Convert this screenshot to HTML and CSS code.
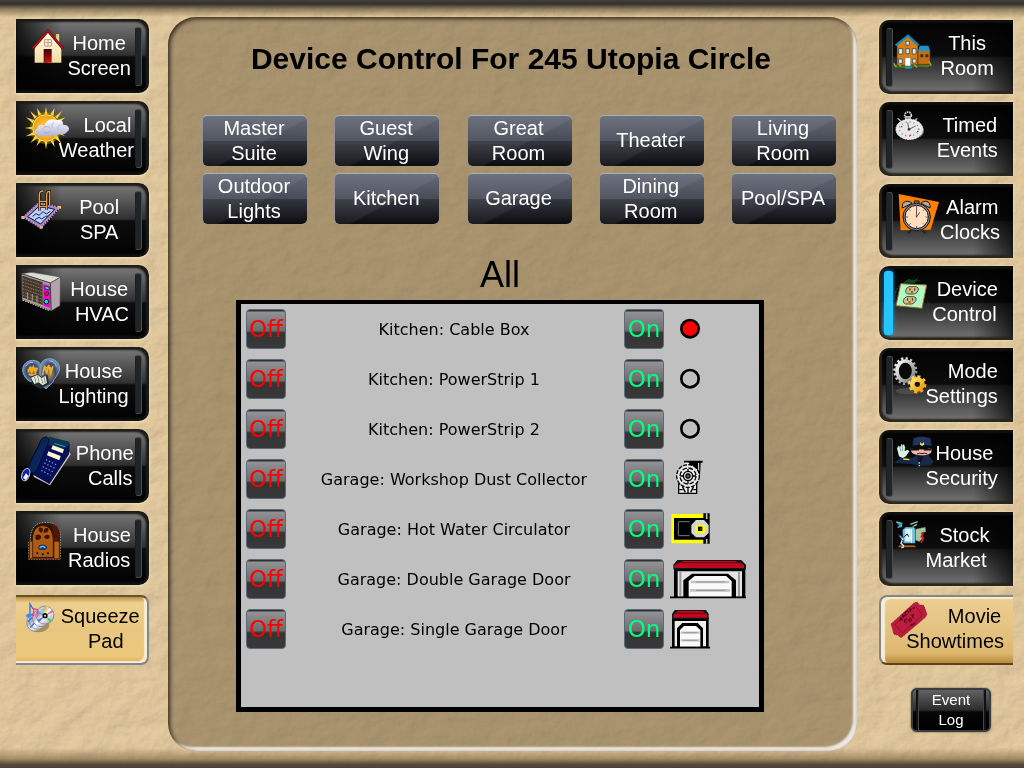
FILE: index.html
```html
<!DOCTYPE html>
<html lang="en">

<head>
    <meta charset="UTF-8">
    <meta name="viewport" content="width=device-width, initial-scale=1.0">
    <title>Device Control</title>
    <link rel="stylesheet" href="styles.css">
</head>

<body>

    <!-- stone wall behind everything -->
    <svg class="stone" aria-hidden="true">
        <filter id="stone" x="0" y="0" width="100%" height="100%">
            <feTurbulence type="fractalNoise" baseFrequency="0.04 0.05" numOctaves="5" seed="8" />
            <feDiffuseLighting lighting-color="#ecd4aa" surfaceScale="2" diffuseConstant="1.1">
                <feDistantLight azimuth="220" elevation="55" />
            </feDiffuseLighting>
        </filter>
        <rect width="100%" height="100%" filter="url(#stone)" />
    </svg>

    <div class="page">

        <nav class="side left" aria-label="House">
            <button type="button" class="tab">
                <svg class="icon" viewBox="48 57 180 180">
                    <defs>
                        <linearGradient id="door" x2="0" y2="1"><stop offset="0" stop-color="#300" /><stop offset="1" stop-color="#d01010" /></linearGradient>
                        <linearGradient id="wall" x2="0" y2="1"><stop offset="0" stop-color="#fffdf0" /><stop offset="1" stop-color="#f3dca0" /></linearGradient>
                    </defs>
                    <path d="M167 101h12v32h-12z" fill="#e9d28c" stroke="#5a3a10" stroke-width="2" />
                    <path d="M104 188v-48l40-46 40 46v48z" fill="url(#wall)" />
                    <path d="M98 146l46-53 45 53" fill="none" stroke="#4a0808" stroke-width="8" />
                    <path d="M98 145l46-53 45 53" fill="none" stroke="#d01a1a" stroke-width="4" />
                    <path d="M134 119h20v19h-20z M144 119v19 M134 128h20" fill="#fff" stroke="#c49468" stroke-width="3" />
                    <path d="M131 147h13v41h-13z" fill="#5a0a08" />
                    <path d="M134 147h21v41h-21z" fill="url(#door)" />
                </svg>
                <span class="label">      Home<br>      Screen</span>
            </button>
            <button type="button" class="tab">
                <svg class="icon" viewBox="48 303 180 180">
                    <defs>
                        <radialGradient id="sun"><stop offset="0" stop-color="#ffd84a" /><stop offset="1" stop-color="#ef9c10" /></radialGradient>
                        <linearGradient id="cloud" x2="0" y2="1"><stop offset="0" stop-color="#fff" /><stop offset="1" stop-color="#aeb0d4" /></linearGradient>
                    </defs>
                    <circle cx="138" cy="384" r="48" fill="#8a7a00" opacity=".6" />
                    <path fill="#ffd23c" d="M134 342l4-22 4 22z M134 426l4 22 4-22z M96 380l-22 4 22 4z M151 343l13-19-4 24z M165 350l21-17-14 23z M172 361l24-9-19 18z M124 343l-13-19 4 24z M111 350l-21-17 14 23z M103 361l-25-9 20 18z M99 397l-22 12 28-4z M106 407l-15 22 22-15z M117 418l-8 21 15-17z M152 424l12 18-4-23z M164 414l21 17-13-24z M174 401l20 7-16-14z" />
                    <circle cx="138" cy="384" r="40" fill="url(#sun)" stroke="#ffe860" stroke-width="3" />
                    <path d="M112 404c-12-1-10-16 0-17 0-12 14-16 22-9 2-16 20-26 35-17 12-6 22 3 20 13 18-1 24 16 12 21-6 9-16 9-21 5-6 10-18 10-24 4-8 8-17 7-21 1-7 6-18 7-23-1z" fill="url(#cloud)" />
                    <path d="M128 386c7-9 20-8 24 0m10-18c-8 3-8 12-2 17m22-10c-8 2-11 8-7 14m-42 6c8 6 15 4 18-2" fill="none" stroke="#9fa2c4" stroke-width="2" />
                </svg>
                <span class="label">         Local<br>     Weather</span>
            </button>
            <button type="button" class="tab">
                <svg class="icon" viewBox="48 549 180 180">
                    <path d="M68 652l49-47 64 17-58 64z" fill="#a68ac4" stroke="#2a1a38" stroke-width="5" stroke-dasharray="5 3" />
                    <path d="M70 652l47-45 63 15-57 62z" fill="none" stroke="#c7a8d8" stroke-width="5" stroke-dasharray="3 5" />
                    <path d="M83 650l36-33 45 11-42 44z" fill="#b9ccff" stroke="#111" stroke-width="3" />
                    <path d="M98 649l10-8 9 5 12-11 10 7 12-8M105 659l12-7 8 5 12-8 8-1" fill="none" stroke="#1c2850" stroke-width="3" />
                    <path d="M118 632v-48q0-12 12-11M140 630v-45q0-12 9-11v42M118 604h22M118 620h22" fill="none" stroke="#201000" stroke-width="8" />
                    <path d="M118 632v-48q0-12 12-11M140 630v-45q0-12 9-11v42M118 604h22M118 620h22" fill="none" stroke="#dfa053" stroke-width="4" />
                    <path d="M119 678h9v8h-9zM64 648h9v9h-9zM174 618h9v8h-9z" fill="#ecb974" />
                </svg>
                <span class="label">      Pool<br>      SPA</span>
            </button>
            <button type="button" class="tab">
                <svg class="icon" viewBox="48 30 180 180">
                    <path d="M64 56l32-4 86 14-31 18z" fill="#dcdcd4" stroke="#555" stroke-width="2" />
                    <path d="M151 84l31-18-2 86-27 16z" fill="#b1a2ab" stroke="#444" stroke-width="2" />
                    <path d="M64 56l87 28 2 84-87-34z" fill="#a89c90" stroke="#222" stroke-width="2" />
                    <path d="M67 62l61 20v68l-61-23z" fill="#43382e" />
                    <path d="M68 71l59 20M68 81l59 20M68 91l59 21M68 101l59 21M68 111l59 22M68 120l59 22" stroke="#8c7660" stroke-width="3" stroke-dasharray="5 3" />
                    <path d="M83 112v20M97 117v20M111 122v21" stroke="#a29a90" stroke-width="3" />
                    <path d="M130 86l20 7v67l-20-8z" fill="#f000e8" />
                    <path d="M135 93l12 4v8l-12-4z" fill="#20e8f0" stroke="#111" stroke-width="2" />
                    <circle cx="140" cy="116" r="6" fill="#e01818" stroke="#111" stroke-width="2" />
                    <circle cx="139" cy="140" r="7" fill="#20d8d8" stroke="#111" stroke-width="3" />
                    <path d="M68 135l80 32" stroke="#f4f4f4" stroke-width="3" stroke-dasharray="4 4" />
                </svg>
                <span class="label">      House<br>       HVAC</span>
            </button>
            <button type="button" class="tab">
                <svg class="icon" viewBox="48 276 180 180">
                    <defs>
                        <radialGradient id="bulb"><stop offset="0" stop-color="#b89840" /><stop offset=".6" stop-color="#3c4674" /><stop offset="1" stop-color="#6f8fb0" /></radialGradient>
                    </defs>
                    <path d="M72 360c-12-22 4-44 26-44 13 0 22 6 26 16l-4 38-26 10c-10-2-18-10-22-20z" fill="url(#bulb)" stroke="#7fa6b8" stroke-width="3" />
                    <path d="M120 336c2-16 14-25 29-25 22 0 34 20 28 38-4 14-14 18-19 34l-20 18-18-12z" fill="url(#bulb)" stroke="#7fa6b8" stroke-width="3" />
                    <path d="M84 352l6-14 5 14 5-16 6 16 6-14M128 360l6-28 6 24 6-26 6 24 7-20M84 346q14-16 28 0M129 348q14-22 29-4M86 358q12 6 24-2" fill="none" stroke="#f2ac20" stroke-width="5" />
                    <path d="M92 365l22-8 10 9 18-7 5 27-24 17-26-14z" fill="#222b2c" />
                    <path d="M93 368l20-9 11 10 13-7 4 21-13 8-12-9-13 5z" fill="#e9efde" />
                    <path d="M103 365l6 20M112 361l5 19M124 370l5 16M132 366l4 18" stroke="#7d887c" stroke-width="3" />
                    <path d="M77 334q7-13 22-12M148 317q18 2 21 18" fill="none" stroke="#a8c2f0" stroke-width="3" />
                </svg>
                <span class="label">    House<br>    Lighting</span>
            </button>
            <button type="button" class="tab">
                <svg class="icon" viewBox="48 522 180 180">
                    <path d="M150 691l62-93-4-8-61 92-48-24 3 8z" fill="#d2d2d2" />
                    <path d="M134 560l74 8-2 30-58 88-52-30z" fill="#061057" stroke="#000528" stroke-width="2" />
                    <path d="M134 556l14-11 60 15v10l-14 10-58-12z" fill="#0c3550" />
                    <path d="M140 546q-16 0-21 18l-34 70q-8 14 8 19 16 3 20-12l30-72q8-16-3-23z" fill="#0a2452" stroke="#000828" stroke-width="3" />
                    <path d="M131 566l-34 72M139 569l-32 72" stroke="#102ca0" stroke-width="3" stroke-dasharray="3 3" />
                    <path d="M158 571l34 12-4 12-34-13zM145 589l37 14-4 13-37-15z" fill="#fff6d5" />
                    <path d="M164 566l32 9" stroke="#3b90c4" stroke-width="3" />
                    <path d="M138 614l32 16M133 624l32 16M128 635l32 16M124 646l28 15" stroke="#7f8ef8" stroke-width="4" stroke-dasharray="4 6" />
                    <path d="M84 640c-12 0-20 14-19 28 2 13 16 12 21-1 4-10 6-20-2-27z" fill="#1420a0" stroke="#d8dcff" stroke-width="3" />
                    <path d="M69 668l9-13 8 8-8 13z" fill="#f2f5ff" />
                </svg>
                <span class="label">        Phone<br>          Calls</span>
            </button>
            <button type="button" class="tab">
                <svg class="icon" viewBox="48 33 180 180">
                    <path d="M86 178v-52l5-5c0-36 15-53 40-53 30-4 51 15 50 44v66z" fill="#2a1608" stroke="#ccc" stroke-width="2" stroke-dasharray="5 3" />
                    <path d="M145 70c26 0 36 15 35 46v60l-18 2v-60c0-28-5-42-17-48z" fill="#4e160a" />
                    <path d="M97 172v-48c0-30 10-47 31-47s32 18 32 46v49z" fill="#ad5a12" stroke="#3a1804" stroke-width="3" />
                    <path d="M88 124h10v52h-10zM162 124h16v52h-16z" fill="#b96414" stroke="#3a1804" stroke-width="2" />
                    <path d="M117 83c13-3 14 8 8 16-8-3-11-10-8-16zM107 106c8-5 15-2 17 6-3 9-13 10-18 4zM132 112c2-8 12-10 17-4 2 8-9 14-17 4zM131 98c0-11 5-16 13-13 4 7-2 15-13 13z" fill="#421006" />
                    <path d="M114 144c3-14 24-14 28 0l-6 5h-17z" fill="#152d58" />
                    <path d="M119 144q9-10 17 0" fill="none" stroke="#5bb8ff" stroke-width="5" />
                    <circle cx="112" cy="160" r="3" /><circle cx="128" cy="163" r="3" /><circle cx="144" cy="160" r="3" />
                    <path d="M84 176h98" stroke="#6e300a" stroke-width="4" />
                </svg>
                <span class="label">       House<br>      Radios</span>
            </button>
            <button type="button" class="tab gold">
                <svg class="icon" viewBox="48 285 180 180">
                    <defs>
                        <linearGradient id="disc" x2="1" y2="1"><stop offset="0" stop-color="#e9eef0" /><stop offset=".35" stop-color="#aeb6c2" /><stop offset=".5" stop-color="#fff" /><stop offset="1" stop-color="#8d97a4" /></linearGradient>
                    </defs>
                    <ellipse cx="116" cy="368" rx="32" ry="23" fill="#6b5830" opacity=".5" />
                    <g stroke="#6f7784" stroke-width="2" fill="url(#disc)">
                        <circle cx="106" cy="362" r="26" />
                        <circle cx="114" cy="356" r="26" />
                        <circle cx="123" cy="348" r="26" />
                        <circle cx="135" cy="339" r="27" />
                    </g>
                    <path d="M135 341l-22-15-3 7z" fill="#28c0b0" /><path d="M135 341l21-18 4 7z" fill="#e460a8" /><path d="M135 341l22 15-6 6z" fill="#46c850" /><path d="M135 341l-18 21-6-8z" fill="#6c70e8" /><path d="M135 341l4-28h7z" fill="#ffd850" />
                    <path d="M84 360l12-13M91 377l12-14" stroke="#4970e8" stroke-width="5" />
                    <circle cx="135" cy="341" r="8" fill="#111" /><circle cx="135" cy="341" r="3" fill="#ddd" />
                    <path d="M90 340v-34l9 15" fill="none" stroke="#2f72e0" stroke-width="4" /><ellipse cx="86" cy="341" rx="8" ry="6" fill="#3a8ff0" />
                    <path d="M101 338v-18l12 3v16" fill="none" stroke="#e83aa8" stroke-width="4" /><circle cx="98" cy="339" r="5" fill="#e83aa8" /><circle cx="110" cy="340" r="5" fill="#f060c0" />
                </svg>
                <span class="label">      Squeeze<br>        Pad</span>
            </button>
        </nav>

        <main class="panel">
            <h1>Device Control For 245 Utopia Circle</h1>

            <div class="rooms">
                <button type="button">Master<br>Suite</button>
                <button type="button">Guest<br>Wing</button>
                <button type="button">Great<br>Room</button>
                <button type="button">Theater</button>
                <button type="button">Living<br>Room</button>
                <button type="button">Outdoor<br>Lights</button>
                <button type="button">Kitchen</button>
                <button type="button">Garage</button>
                <button type="button">Dining<br>Room</button>
                <button type="button">Pool/SPA</button>
            </div>

            <section class="devices">
                <h2>All</h2>
                <div class="list">
                    <table>
                        <tr>
                            <td><button type="button" class="off">Off</button></td>
                            <th scope="row">Kitchen: Cable Box</th>
                            <td><button type="button" class="on">On</button></td>
                            <td class="state"><svg viewBox="210 28 240 120"><circle cx="270" cy="87" r="26" fill="#f00" stroke="#000" stroke-width="8" /></svg></td>
                        </tr>
                        <tr>
                            <td><button type="button" class="off">Off</button></td>
                            <th scope="row">Kitchen: PowerStrip 1</th>
                            <td><button type="button" class="on">On</button></td>
                            <td class="state"><svg viewBox="210 28 240 120"><circle cx="270" cy="87" r="26" fill="none" stroke="#000" stroke-width="8" /></svg></td>
                        </tr>
                        <tr>
                            <td><button type="button" class="off">Off</button></td>
                            <th scope="row">Kitchen: PowerStrip 2</th>
                            <td><button type="button" class="on">On</button></td>
                            <td class="state"><svg viewBox="210 28 240 120"><circle cx="270" cy="87" r="26" fill="none" stroke="#000" stroke-width="8" /></svg></td>
                        </tr>
                        <tr>
                            <td><button type="button" class="off">Off</button></td>
                            <th scope="row">Garage: Workshop Dust Collector</th>
                            <td><button type="button" class="on">On</button></td>
                            <td class="state">
                                <svg viewBox="210 478 240 120">
                                    <path d="M252 483h56v6h-6l-2 38-10-14-36-9z" fill="#000" />
                                    <path d="M254 490h12v10h-12zM296 490v24" fill="#eee" stroke="#eee" stroke-width="3" />
                                    <path d="M236 581v-28h54v28z" fill="#eee" stroke="#000" stroke-width="4" />
                                    <path d="M247 560l9 18M281 560l-9 18M264 556v24M238 570h10M280 570h10" stroke="#000" stroke-width="4" />
                                    <circle cx="264" cy="529" r="34" fill="#e8e8e8" stroke="#000" stroke-width="4" stroke-dasharray="12 4" />
                                    <circle cx="264" cy="529" r="24" fill="none" stroke="#000" stroke-width="4" stroke-dasharray="14 5" />
                                    <circle cx="264" cy="529" r="14" fill="#ccc" stroke="#000" stroke-width="4" />
                                    <circle cx="264" cy="529" r="6" fill="#666" stroke="#000" stroke-width="4" />
                                    <path d="M264 508v8M264 542v10M241 529h9M279 529h9" stroke="#000" stroke-width="4" />
                                </svg>
                            </td>
                        </tr>
                        <tr>
                            <td><button type="button" class="off">Off</button></td>
                            <th scope="row">Garage: Hot Water Circulator</th>
                            <td><button type="button" class="on">On</button></td>
                            <td class="state">
                                <svg viewBox="210 88 240 120">
                                    <path d="M214 103h96v88h-96z" fill="#ff0" />
                                    <path d="M222 115h94v65h-94zM310 101h19v91h-19z" fill="#000" />
                                    <path d="M320 101v17M320 178v14" stroke="#bbb" stroke-width="5" />
                                    <path d="M235 126h34M235 168h34M235 128v38" stroke="#777" stroke-width="3" fill="none" />
                                    <path d="M288 121h24l14 15v24l-14 13h-24l-14-13v-24z" fill="#d6d6d6" />
                                    <path d="M291 135h20l5 5v16l-5 5h-20l-5-5v-16z" fill="#ff0" />
                                    <path d="M294 141h13v13h-13z" fill="#000" />
                                    <path d="M300 146h5v5h-5z" fill="#443" />
                                </svg>
                            </td>
                        </tr>
                        <tr>
                            <td><button type="button" class="off">Off</button></td>
                            <th scope="row">Garage: Double Garage Door</th>
                            <td><button type="button" class="on">On</button></td>
                            <td class="state">
                                <svg viewBox="210 238 240 120">
                                    <path d="M222 262h214v93h-214z" fill="#000" />
                                    <path d="M232 241h192l14 14v14h-218v-14z" fill="#0a1a1a" />
                                    <path d="M250 244h156l26 12v9h-209v-9z" fill="#c00820" />
                                    <path d="M232 249h192" stroke="#6c0010" stroke-width="3" />
                                    <path d="M233 275h193v76h-193z" fill="#e4e4e4" />
                                    <path d="M241 276v75M417 276v75" stroke="#9a9a9a" stroke-width="6" />
                                    <path d="M250 355v-53l26-20h108l24 20v53z" fill="#000" />
                                    <path d="M266 352v-48l18-15h94l17 15v48z" fill="#fafafa" />
                                    <path d="M272 307h116M270 332h120" stroke="#c4c4c4" stroke-width="8" />
                                    <path d="M288 307h88M288 332h88" stroke="#999" stroke-width="3" />
                                    <path d="M210 353h228" stroke="#000" stroke-width="5" />
                                </svg>
                            </td>
                        </tr>
                        <tr>
                            <td><button type="button" class="off">Off</button></td>
                            <th scope="row">Garage: Single Garage Door</th>
                            <td><button type="button" class="on">On</button></td>
                            <td class="state">
                                <svg viewBox="210 388 240 120">
                                    <path d="M216 412h110v93h-110z" fill="#000" />
                                    <path d="M224 391h94l8 12v15h-110v-15z" fill="#0a1a1a" />
                                    <path d="M234 394h74l14 12v8h-102v-8z" fill="#c00820" />
                                    <path d="M228 401h86" stroke="#6c0010" stroke-width="3" />
                                    <path d="M224 424h94v76h-94z" fill="#eee" />
                                    <path d="M231 504v-58l16-16h46l16 16v58z" fill="#000" />
                                    <path d="M240 501v-50l12-12h36l13 12v50z" fill="#fafafa" />
                                    <path d="M242 459h57M242 482h57" stroke="#c4c4c4" stroke-width="7" />
                                    <path d="M250 459h42M250 482h42" stroke="#999" stroke-width="3" />
                                    <path d="M210 504h120" stroke="#000" stroke-width="5" />
                                </svg>
                            </td>
                        </tr>
                    </table>
                </div>
            </section>
        </main>

        <nav class="side right" aria-label="Control">
            <button type="button" class="tab">
                <svg class="icon" viewBox="90 60 180 180">
                    <path d="M132 197l15-6 95-2 8 7-14 6-30-2-40 4-20-2z" fill="#4d7424" />
                    <path d="M144 196v-66l33-22 30 24v62z" fill="#d67f14" stroke="#4a2804" stroke-width="2" />
                    <path d="M207 151h36v42h-36z" fill="#c56e10" stroke="#4a2804" stroke-width="2" />
                    <path d="M140 136l37-29 32 29" fill="none" stroke="#1188c0" stroke-width="7" />
                    <path d="M207 153l5-16h26l6 16z" fill="#1794d2" />
                    <path d="M171 124h10v11h-10zM149 146h12v16h-12zM171 146h10v15h-10zM190 146h11v16h-11zM149 177h11v13h-11zM191 177h10v12h-10z" fill="#d8f0f5" stroke="#234" stroke-width="2" />
                    <path d="M168 173h17v25h-17z" fill="#fff" stroke="#777" stroke-width="2" />
                    <path d="M214 163h9v9h-9zM229 163h9v9h-9z" fill="#332" />
                    <path d="M168 203h20" stroke="#16a0d8" stroke-width="5" />
                    <path d="M134 190l8 12M240 184l6 12M196 194l8 9M150 190l5 9" stroke="#7fb43a" stroke-width="4" />
                </svg>
                <span class="label">        This<br>        Room</span>
            </button>
            <button type="button" class="tab">
                <svg class="icon" viewBox="90 306 180 180">
                    <circle cx="177" cy="346" r="10" fill="none" stroke="#ddd" stroke-width="5" stroke-dasharray="5 2" />
                    <path d="M170 350h14v14h-14zM146 355l10 9M205 355l-8 8" fill="#999" stroke="#bbb" stroke-width="4" />
                    <ellipse cx="184" cy="392" rx="41" ry="27" fill="#777" />
                    <ellipse cx="181" cy="388" rx="40" ry="30" fill="#e9e7e9" stroke="#fff" stroke-width="3" stroke-dasharray="6 2" />
                    <ellipse cx="180" cy="387" rx="29" ry="21" fill="none" stroke="#444" stroke-width="4" stroke-dasharray="2 10" />
                    <path d="M180 388l-4-20M180 388l20-10" stroke="#222" stroke-width="2" />
                    <path d="M156 380h4M204 394h4M182 406h4" stroke="#d22" stroke-width="4" />
                    <circle cx="180" cy="388" r="4" fill="#333" />
                </svg>
                <span class="label">         Timed<br>        Events</span>
            </button>
            <button type="button" class="tab">
                <svg class="icon" viewBox="90 552 180 180">
                    <path d="M149 582l121 24-25 83-90 2z" fill="#ff8000" />
                    <path d="M186 690l-8 10M220 690l9 10" stroke="#222" stroke-width="6" />
                    <path d="M160 624c-3-24 20-24 29-14zM243 624c3-24-19-24-27-14z" fill="#aaa" stroke="#111" stroke-width="3" />
                    <path d="M196 603h14v9h-14z" fill="#777" stroke="#111" stroke-width="3" />
                    <circle cx="203" cy="651" r="41" fill="#8d8d8d" stroke="#111" stroke-width="3" />
                    <circle cx="203" cy="651" r="35" fill="#ffdfc0" stroke="#111" stroke-width="3" />
                    <path d="M203 624l-1 28 10-15M203 618v6M203 678v6M170 651h7M230 651h6M180 628l4 4M226 628l-4 4M181 674l4-4M226 674l-4-4" fill="none" stroke="#111" stroke-width="2" />
                </svg>
                <span class="label">          Alarm<br>         Clocks</span>
            </button>
            <button type="button" class="tab active" aria-current="page">
                <svg class="icon" viewBox="90 33 180 180">
                    <path d="M142 148c-12-24 0-62 30-68l42-3M232 136c16 14 0 32-33 34-23 1-45-3-54-15" fill="none" stroke="#174a28" stroke-width="3" stroke-dasharray="8 3" />
                    <path d="M164 83l13-11 18 4 14-9-12 17z" fill="#0b4a1e" />
                    <path d="M155 86l78 4-14 70-78-8z" fill="#e2e6a0" stroke="#78704a" stroke-width="3" />
                    <path d="M160 91l66 4-11 58-68-6z" fill="#a4ffcb" />
                    <path d="M180 95h22q9 3 6 11t-12 11h-20q-8-3-6-11t10-11zM173 125h22q9 3 6 11t-12 11h-20q-8-3-6-11t10-11z" fill="#d3b981" stroke="#555030" stroke-width="3" />
                    <path d="M183 100v7M197 100v7M186 111h6M176 130v7M190 130v7M179 141h6" stroke="#222" stroke-width="3" />
                </svg>
                <span class="label">        Device<br>       Control</span>
            </button>
            <button type="button" class="tab">
                <svg class="icon" viewBox="90 279 180 180">
                    <defs>
                        <linearGradient id="steel" x2="1" y2="1"><stop offset="0" stop-color="#fff" /><stop offset="1" stop-color="#777" /></linearGradient>
                        <linearGradient id="brass" x2="1" y2="1"><stop offset="0" stop-color="#ffe36a" /><stop offset="1" stop-color="#f09a08" /></linearGradient>
                    </defs>
                    <ellipse cx="178" cy="408" rx="38" ry="10" fill="#555" opacity=".7" />
                    <ellipse cx="169" cy="348" rx="25" ry="30" fill="none" stroke="url(#steel)" stroke-width="11" />
                    <ellipse cx="169" cy="348" rx="32" ry="38" fill="none" stroke="url(#steel)" stroke-width="8" pathLength="32" stroke-dasharray="1 1" />
                    <circle cx="205" cy="388" r="15" fill="none" stroke="url(#brass)" stroke-width="14" />
                    <circle cx="205" cy="388" r="23" fill="none" stroke="url(#brass)" stroke-width="9" pathLength="16" stroke-dasharray="1 1" />
                </svg>
                <span class="label">          Mode<br>      Settings</span>
            </button>
            <button type="button" class="tab">
                <svg class="icon" viewBox="90 525 180 180">
                    <path d="M136 623l20-16 36 1 12-10 34 2 16 20-8 11-32 2-28-6z" fill="#18284a" />
                    <path d="M204 604l8 24 12-24z" fill="#0b1228" />
                    <path d="M185 580q30 8 64-2l-2 14q-10 12-36 8-20-2-24-10z" fill="#f4b7a8" />
                    <path d="M186 584h24M224 584h24" stroke="#111" stroke-width="5" />
                    <path d="M204 597q8-5 15-1 8-4 16 1" stroke="#32180d" stroke-width="3" fill="none" />
                    <path d="M190 574l3-24q24-11 52 0l3 24q-30-9-58 0z" fill="#20365f" stroke="#0a142c" stroke-width="2" />
                    <path d="M183 576q34-14 69 0l-3 6q-30-9-62 0z" fill="#070b14" />
                    <path d="M214 561l5 6 5-6 2 8-7 4-6-4z" fill="#ffe030" />
                    <path d="M150 604l-6-24 5-8 5 4 3-8 5 2 3-2 3 8v12l8-4 5 5-10 15-10 5z" fill="#d9f5e2" />
                    <path d="M152 575l4 14M160 570l1 18M169 576l-2 12" stroke="#5f7f78" stroke-width="2" />
                    <path d="M211 622v4M211 630v4M163 612l18 2" stroke="#fd3" stroke-width="4" />
                </svg>
                <span class="label">       House<br>      Security</span>
            </button>
            <button type="button" class="tab">
                <svg class="icon" viewBox="90 36 180 180">
                    <path d="M142 66l14 4 2 10M146 82l10-4M184 73l22-8M190 81l14-8" fill="none" stroke="#a5ca9c" stroke-width="4" />
                    <path d="M147 68l10 14M150 75l10-6" stroke="#20a8e0" stroke-width="5" />
                    <path d="M198 88l31-7 2 14-14 4 6 14-12 12-15-6z" fill="#a9c4a0" stroke="#28422c" stroke-width="2" stroke-dasharray="5 3" />
                    <path d="M160 90l10-9h24l5 5v44h-36z" fill="#7ec6dc" stroke="#143242" stroke-width="2" />
                    <path d="M169 87h16v37h-16z" fill="#d8f6ff" />
                    <path d="M187 88v40" stroke="#fff" stroke-width="3" />
                    <path d="M166 110l9-8 4 8" fill="none" stroke="#111" stroke-width="3" />
                    <path d="M151 136h44l8 6h-56z" fill="#a05c22" />
                    <path d="M153 108l8 10-5 12 9 8M157 144l8-4" fill="none" stroke="#e8e8ff" stroke-width="4" />
                    <path d="M149 104l7 10 9-3M157 119l9 6" fill="none" stroke="#4f50b0" stroke-width="3" />
                    <path d="M224 96l-7 14 6 5-7 14" fill="none" stroke="#e01818" stroke-width="5" />
                </svg>
                <span class="label">       Stock<br>    Market</span>
            </button>
            <button type="button" class="tab gold">
                <svg class="icon" viewBox="96 288 180 180">
                    <path d="M126 369l69-63 9-3 8 9 12 1 10 27-5 9-66 56-7 5-10-8-11-2z" fill="#bd1c3f" stroke="#7f0f28" stroke-width="2" stroke-dasharray="4 2" />
                    <path d="M138 371l62-55 21 26-61 54z" fill="none" stroke="#7a0b25" stroke-width="2" />
                    <path d="M152 360l4-10 5 8M163 350l-3-9 7 2-3 5M171 343l-4-9 7-3M179 336l-4-9M184 331l-2-9 6 4M192 324l4-6M174 366l-7-3 1-8 6-1M178 358l6-7 5 6-6 5zM194 352l-6-9 8-2M184 371l6 3 4-6 6 1" fill="none" stroke="#3c0010" stroke-width="3" />
                </svg>
                <span class="label">           Movie<br>    Showtimes</span>
            </button>
            <button type="button" class="log">Event<br>Log</button>
        </nav>

    </div>

</body>

</html>
```
FILE: styles.css
```css
* {
    box-sizing: border-box;
}

body {
    margin: 0;
    background-color: #d6bc8f;
    font-family: "Liberation Sans", Arial, sans-serif;
    color: black;
}

button {
    font-family: inherit;
    border: none;
    padding: 0;
    color: white;
    cursor: pointer;
}

.stone {
    position: fixed;
    inset: 0;
    width: 100%;
    height: 100%;
    z-index: -1;
    opacity: 0.6;
}

.page {
    min-height: 100vh;
    display: grid;
    grid-template-columns: 133px 1fr 134px;
    padding: 17px 11px 17px 16px;
    background-image:
        linear-gradient(to bottom, #45423e 0, #33302b 4px, rgba(60, 50, 35, 0.5) 9px, transparent 17px),
        linear-gradient(to top, #4a4038 0, #5a4c3a 4px, rgba(100, 80, 50, 0.5) 9px, transparent 20px);
}

/* side buttons */

.side {
    display: flex;
    flex-direction: column;
    gap: 8px;
    padding-top: 2px;
}

.right {
    padding-top: 3px;
}

.tab {
    position: relative;
    display: flex;
    justify-content: center;
    align-items: center;
    height: 74px;
    font-size: 20px;
    line-height: 25px;
}

.left .tab {
    border-radius: 0 10px 10px 0;
    background-image:
        linear-gradient(to right, rgba(0, 0, 0, 0.8) 0, transparent 35%),
        linear-gradient(to bottom, #747474 4px, #303030 36px, #0c0c0c 38px, #020202 100%);
    box-shadow: inset -3px 3px 2px #1d1b17, inset 0 -3px 2px #111, 0 1px 3px #f6e6c4;
}

.right .tab {
    padding: 0 2px 2px 0;
    border-radius: 10px 0 0 10px;
    background-image:
        linear-gradient(to left, rgba(0, 0, 0, 0.7) 0, transparent 30%),
        linear-gradient(to bottom, #020202 0, #0c0c0c 36px, #262626 38px, #6e6e6e 70px);
    box-shadow: inset 3px -3px 2px #2a251d, inset 0 3px 2px #111, 0 0 3px #f6e6c4;
}

.tab::after {
    content: "";
    position: absolute;
    top: 8px;
    bottom: 7px;
    right: 7px;
    width: 5px;
    border: 1px solid #4a4c4e;
    border-left-color: #1c1e1f;
    border-radius: 3px;
    background-color: #202427;
}

.right .tab::after {
    right: auto;
    left: 7px;
}

.right .active::after {
    top: 5px;
    bottom: 5px;
    left: 5px;
    width: 9px;
    border: none;
    background-color: #25c5ff;
    box-shadow: 0 0 4px #1598e0;
}

.icon {
    position: absolute;
    top: 0;
    left: 0;
    width: 60px;
    height: 60px;
}

.label {
    position: relative;
    white-space: pre;
}

.side .gold {
    color: black;
    border-radius: 0 8px 8px 0;
    border: 2px solid #85858a;
    border-left: none;
    border-top-color: #6b5224;
    margin: 2px 0;
    padding: 0 0 2px 4px;
    height: 70px;
    background-image: linear-gradient(to bottom, #b98e48 0, #eed08e 6px, #e8c67f 50%, #ecc87c 90%, #d8aa58 100%);
    box-shadow: inset -3px -2px 1px #f6ecd4;
}

.right .gold {
    border-radius: 8px 0 0 8px;
    border: 2px solid #85858a;
    border-right: none;
    border-bottom-color: #5c431a;
    margin-top: 1px;
    padding: 0 6px 2px 0;
    background-image: linear-gradient(to bottom, #eccf92 0, #e4c282 50%, #dfb870 85%, #b98a3c 100%);
    box-shadow: inset 4px 2px 1px #f6ecd4;
}

.gold::after {
    display: none;
}

.log {
    align-self: center;
    width: 80px;
    height: 44px;
    margin: 13px 0 0 10px;
    padding-bottom: 2px;
    border: 2px solid #3a3c40;
    border-radius: 6px;
    font-size: 15px;
    line-height: 20px;
    background-image:
        linear-gradient(to right, transparent 3px, #111 3px, #111 5px, #444 5px, #444 6px, transparent 6px, transparent 70px, #444 70px, #444 71px, #111 71px, #111 73px, transparent 73px),
        linear-gradient(to bottom, #626262 0, #2c2c2c 20px, #060606 22px, #000 100%);
    box-shadow: 0 0 2px #555;
}

/* centre panel */

.panel {
    margin: 0 22px 0 19px;
    padding: 26px 21px 38px 34px;
    border-radius: 28px;
    background-color: rgba(114, 95, 66, 0.5);
    box-shadow: inset 2px 2px 4px rgba(30, 20, 10, 0.8), inset -4px -4px 2px #eee9e2;
}

.panel h1 {
    margin: 0 16px 0 0;
    font-size: 30px;
    line-height: 32px;
    text-align: center;
}

.rooms {
    display: grid;
    grid-template-columns: repeat(5, 105px);
    justify-content: space-between;
    gap: 7px;
    margin-top: 40px;
}

.rooms button {
    height: 51px;
    padding: 0 2px 2px 0;
    border-radius: 5px;
    border-top: 1px solid #a9adb8;
    border-left: 1px solid #8f939c;
    font-size: 20px;
    line-height: 25px;
    background-image:
        linear-gradient(152deg, rgba(255, 255, 255, 0.06) 54%, transparent 56%),
        linear-gradient(to bottom, #646977 0, #484c58 49%, #34363f 51%, #0c0c0f 100%);
}

.devices {
    margin: 30px 72px 0 34px;
}

.devices h2 {
    margin: 0;
    font-size: 36px;
    font-weight: normal;
    line-height: 42px;
    text-align: center;
}

.list {
    margin-top: 4px;
    padding-bottom: 53px;
    border: 5px solid black;
    border-top-width: 4px;
    background-color: #c0c0c0;
}

.list table {
    width: 100%;
    border-collapse: collapse;
}

.list tr {
    height: 50px;
}

.list td {
    width: 48px;
    padding: 0 0 0 5px;
}

.list td.state {
    width: 92px;
    padding-left: 3px;
}

.list th {
    padding: 0;
    font-family: "DejaVu Sans", Verdana, sans-serif;
    font-size: 16px;
    font-weight: normal;
}

.list button {
    display: block;
    width: 40px;
    height: 40px;
    border: 1px solid #5a6a7c;
    border-radius: 4px;
    font-family: "DejaVu Sans", Verdana, sans-serif;
    font-size: 23px;
    line-height: 36px;
    background-image: linear-gradient(to bottom, #2e3234 0, #2e3234 1px, #929294 2px, #6c6c6e 54%, #343434 60%, #383838 100%);
}

.list .off {
    color: #ff0000;
}

.list .on {
    color: #00ff80;
}

.state svg {
    display: block;
    width: 80px;
    height: 40px;
}
```
